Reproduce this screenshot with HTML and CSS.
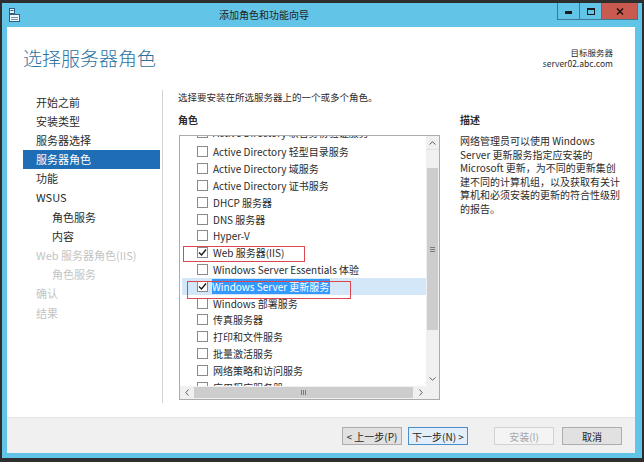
FILE: index.html
```html
<!DOCTYPE html>
<html>
<head>
  <meta charset="utf-8">
  <title>添加角色和功能向导</title>
  <link rel="stylesheet" href="styles.css">
</head>
<body>
  <div class="window">
    <div class="titlebar">
      <svg class="app-icon" width="11" height="14" viewBox="0 0 11 14">
        <rect x="0.5" y="0.5" width="5" height="5" fill="#e8f4fb" stroke="#2d5f86"/>
        <rect x="1.5" y="2" width="3" height="1" fill="#2d5f86"/>
        <rect x="0.5" y="6.5" width="10" height="7" fill="#f4f8fb" stroke="#2d5f86"/>
        <rect x="2" y="9" width="7" height="1" fill="#6a8fb0"/>
        <rect x="2" y="11" width="7" height="1" fill="#6a8fb0"/>
      </svg>
      <div class="title">添加角色和功能向导</div>
      <div class="caption-buttons">
        <div class="cap-btn cap-min"><span></span></div>
        <div class="cap-btn cap-max"><span></span></div>
        <div class="cap-btn cap-close">
          <svg width="8" height="7" viewBox="0 0 8 7"><path d="M1 0.5 L7 6.5 M7 0.5 L1 6.5" stroke="#2a1512" stroke-width="1.6"/></svg>
        </div>
      </div>
    </div>

    <div class="content">
      <div class="page-header">
        <h1>选择服务器角色</h1>
        <div class="target">
          <div>目标服务器</div>
          <div>server02.abc.com</div>
        </div>
      </div>

      <div class="page-body">
        <ul class="nav">
          <li>开始之前</li>
          <li>安装类型</li>
          <li>服务器选择</li>
          <li class="active">服务器角色</li>
          <li>功能</li>
          <li>WSUS</li>
          <li class="sub">角色服务</li>
          <li class="sub">内容</li>
          <li class="disabled">Web 服务器角色(IIS)</li>
          <li class="sub disabled">角色服务</li>
          <li class="disabled">确认</li>
          <li class="disabled">结果</li>
        </ul>

        <div class="main">
          <div class="intro">选择要安装在所选服务器上的一个或多个角色。</div>
          <div class="columns">
            <div class="roles">
              <div class="section-label">角色</div>
              <div class="listbox">
                <div class="list-area">
                  <div class="list-rows">
                    <div class="row row-partial"><span class="check"></span>Active Directory 联合身份验证服务</div>
                    <div class="row"><span class="check"></span>Active Directory 轻型目录服务</div>
                    <div class="row"><span class="check"></span>Active Directory 域服务</div>
                    <div class="row"><span class="check"></span>Active Directory 证书服务</div>
                    <div class="row"><span class="check"></span>DHCP 服务器</div>
                    <div class="row"><span class="check"></span>DNS 服务器</div>
                    <div class="row"><span class="check"></span>Hyper-V</div>
                    <div class="row"><span class="check checked"><svg width="9" height="9" viewBox="0 0 9 9"><path d="M1 4.5 L3.5 7 L8 1.5" fill="none" stroke="#1c1c1c" stroke-width="1.4"/></svg></span>Web 服务器(IIS)</div>
                    <div class="row"><span class="check"></span>Windows Server Essentials 体验</div>
                    <div class="row selected"><span class="check checked"><svg width="9" height="9" viewBox="0 0 9 9"><path d="M1 4.5 L3.5 7 L8 1.5" fill="none" stroke="#1c1c1c" stroke-width="1.4"/></svg></span><span class="sel-text">Windows Server 更新服务</span></div>
                    <div class="row"><span class="check"></span>Windows 部署服务</div>
                    <div class="row"><span class="check"></span>传真服务器</div>
                    <div class="row"><span class="check"></span>打印和文件服务</div>
                    <div class="row"><span class="check"></span>批量激活服务</div>
                    <div class="row"><span class="check"></span>网络策略和访问服务</div>
                    <div class="row"><span class="check"></span>应用程序服务器</div>
                  </div>
                  <div class="vscroll">
                    <div class="arrow arrow-up"><svg width="7" height="4" viewBox="0 0 7 4"><path d="M0.5 3.5 L3.5 0.8 L6.5 3.5" fill="none" stroke="#606060"/></svg></div>
                    <div class="vthumb"><span class="grip-h"></span></div>
                    <div class="arrow arrow-down"><svg width="7" height="4" viewBox="0 0 7 4"><path d="M0.5 0.5 L3.5 3.2 L6.5 0.5" fill="none" stroke="#606060"/></svg></div>
                  </div>
                </div>
                <div class="hscroll">
                  <div class="arrow"><svg width="4" height="7" viewBox="0 0 4 7"><path d="M3.5 0.5 L0.8 3.5 L3.5 6.5" fill="none" stroke="#606060"/></svg></div>
                  <div class="hthumb"><span class="grip-v"></span></div>
                  <div class="arrow"><svg width="4" height="7" viewBox="0 0 4 7"><path d="M0.5 0.5 L3.2 3.5 L0.5 6.5" fill="none" stroke="#606060"/></svg></div>
                  <div class="corner"></div>
                </div>
                <div class="mark mark-web"></div>
                <div class="mark mark-wsus"></div>
              </div>
            </div>

            <div class="desc">
              <div class="section-label">描述</div>
              <div class="desc-text">网络管理员可以使用 Windows<br>Server 更新服务指定应安装的<br>Microsoft 更新，为不同的更新集创<br>建不同的计算机组，以及获取有关计<br>算机和必须安装的更新的符合性级别<br>的报告。</div>
            </div>
          </div>
        </div>
      </div>
    </div>

    <div class="footer">
      <button class="button">&lt; 上一步(P)</button>
      <button class="button button-next">下一步(N) &gt;</button>
      <button class="button button-install" disabled>安装(I)</button>
      <button class="button button-cancel">取消</button>
    </div>
  </div>
</body>
</html>
```

FILE: styles.css
```css
body {
  margin: 0;
  width: 644px;
  height: 462px;
  overflow: hidden;
  background-color: #2e2e2e;
  font-family: "Noto Sans CJK SC", "Noto Sans", sans-serif;
  color: #2b2b2b;
}

.window {
  width: 640px;
  height: 455px;
  margin: 3px 2px 4px 2px;
  padding: 0 7px 5px 5px;
  box-sizing: border-box;
  background-color: #62c5e8;
  display: flex;
  flex-direction: column;
}

/* Title bar */
.titlebar {
  height: 24px;
  margin: 0 -7px 0 -5px;
  padding-right: 4px;
  display: flex;
  align-items: flex-start;
  flex-shrink: 0;
}

.app-icon {
  margin: 5px 0 0 7px;
}

.title {
  flex: 1;
  padding-left: 199px;
  font-size: 10px;
  line-height: 24px;
  color: #1e1e1e;
}

.caption-buttons {
  display: flex;
  height: 17px;
}

.cap-btn {
  height: 17px;
  box-sizing: border-box;
  border: 1px solid #3d7892;
  border-top: none;
  display: flex;
  align-items: center;
  justify-content: center;
}

.cap-min,
.cap-max {
  width: 23px;
  background-color: #62c5e8;
}

.cap-max {
  width: 22px;
  border-left: none;
}

.cap-min span {
  width: 7px;
  height: 3px;
  background-color: #1a1a1a;
  margin-top: 3px;
}

.cap-max span {
  width: 6px;
  height: 4px;
  border: 1px solid #1a1a1a;
  border-top-width: 2px;
}

.cap-close {
  width: 36px;
  border-left: none;
  background-color: #c85a4f;
}

/* Content */
.content {
  flex: 1;
  background-color: #ffffff;
  display: flex;
  flex-direction: column;
  min-height: 0;
}

.page-header {
  height: 63px;
  box-sizing: border-box;
  padding: 20px 22px 0 16px;
  display: flex;
  justify-content: space-between;
  align-items: flex-start;
  flex-shrink: 0;
}

.page-header h1 {
  margin: 0;
  font-size: 19px;
  line-height: 22px;
  font-weight: 300;
  color: #2c72a0;
}

.target {
  text-align: right;
  font-size: 8.5px;
  line-height: 10.5px;
  color: #2b2b2b;
}

.page-body {
  flex: 1;
  display: flex;
  padding-bottom: 14px;
  min-height: 0;
}

.nav {
  width: 156px;
  box-sizing: border-box;
  margin: 0;
  padding: 2.5px 2px 0 16px;
  list-style: none;
  border-right: 1px solid #d4d4d4;
  font-size: 11px;
}

.nav li {
  height: 19.2px;
  line-height: 19.2px;
  padding-left: 13px;
  white-space: nowrap;
}

.nav li.sub {
  padding-left: 29px;
}

.nav li.active {
  background-color: #1f6db5;
  color: #ffffff;
}

.nav li.disabled {
  color: #c4c4c4;
}

.main {
  flex: 1;
  padding: 1px 0 0 15px;
}

.intro {
  font-size: 9.5px;
  line-height: 12px;
}

.columns {
  display: flex;
  margin-top: 11px;
  gap: 20px;
}

.roles {
  width: 262px;
}

.section-label {
  font-size: 10px;
  line-height: 12px;
  font-weight: 700;
  color: #2b2b2b;
}

.listbox {
  position: relative;
  margin: 9px 0 0 1px;
  width: 261px;
  height: 265px;
  box-sizing: border-box;
  border: 1px solid #acacac;
  display: flex;
  flex-direction: column;
  overflow: hidden;
}

.list-area {
  flex: 1;
  display: flex;
  min-height: 0;
}

.list-rows {
  flex: 1;
  overflow: hidden;
}

.row {
  height: 16.8px;
  display: flex;
  align-items: center;
  padding-left: 17px;
  font-size: 10px;
  white-space: nowrap;
  color: #2b2b2b;
}

/* row scrolled almost out of view at the top */
.row-partial {
  height: 22.6px;
  margin-top: -15px;
}

.row.selected {
  margin-left: 2px;
  padding-left: 15px;
  background-color: #d3e7f8;
}

.sel-text {
  background-color: #3399ff;
  color: #ffffff;
  padding-right: 1px;
}

.check {
  width: 11px;
  height: 11px;
  box-sizing: border-box;
  border: 1px solid #8a8a8a;
  background-color: #ffffff;
  margin-right: 5px;
  flex-shrink: 0;
  display: flex;
  align-items: center;
  justify-content: center;
}

.row.selected .check {
  margin-right: 4px;
}

.vscroll {
  width: 13px;
  background-color: #f0f0f0;
  display: flex;
  flex-direction: column;
}

.arrow {
  width: 13px;
  height: 14px;
  display: flex;
  align-items: center;
  justify-content: center;
  flex-shrink: 0;
}

.arrow-up {
  margin-bottom: 18px;
  border-bottom: 1px solid #e2e2e2;
  box-sizing: border-box;
}

.arrow-down {
  margin-top: auto;
}

.vthumb {
  height: 162px;
  margin: 0 1px;
  background-color: #cdcdcd;
  display: flex;
  align-items: center;
  justify-content: center;
}

.grip-h {
  width: 5px;
  height: 5px;
  border-top: 1px solid #7a7a7a;
  border-bottom: 1px solid #7a7a7a;
  box-sizing: border-box;
  background: linear-gradient(#7a7a7a, #7a7a7a) center / 5px 1px no-repeat;
}

.hscroll {
  height: 13px;
  display: flex;
  background-color: #f0f0f0;
  flex-shrink: 0;
}

.hscroll .arrow {
  height: 13px;
}

.hthumb {
  width: 219px;
  margin: 1px 1px;
  background-color: #cdcdcd;
  display: flex;
  align-items: center;
  justify-content: center;
}

.grip-v {
  width: 5px;
  height: 5px;
  border-left: 1px solid #7a7a7a;
  border-right: 1px solid #7a7a7a;
  box-sizing: border-box;
  background: linear-gradient(#7a7a7a, #7a7a7a) center / 1px 5px no-repeat;
}

.corner {
  flex: 1;
  background-color: #f0f0f0;
}

/* Red annotation boxes over the list */
.mark {
  position: absolute;
  box-sizing: border-box;
  border: 1.5px solid #dc4650;
}

.mark-web {
  left: 3px;
  top: 110px;
  width: 122px;
  height: 16px;
}

.mark-wsus {
  left: 7px;
  top: 145px;
  width: 164px;
  height: 18px;
}

.desc {
  width: 162px;
}

.desc-text {
  margin-top: 8px;
  font-size: 10px;
  line-height: 13.5px;
  white-space: nowrap;
  color: #2b2b2b;
}

/* Footer buttons */
.footer {
  height: 36px;
  box-sizing: border-box;
  flex-shrink: 0;
  background-color: #f0f0f0;
  border-top: 1px solid #e4e4e4;
  padding: 9px 13px 0 0;
  display: flex;
  justify-content: flex-end;
  align-items: flex-start;
}

.button {
  width: 60px;
  height: 18px;
  padding: 0;
  box-sizing: border-box;
  border: 1px solid #adadad;
  background-color: #e1e1e1;
  font-family: "Noto Sans CJK SC", "Noto Sans", sans-serif;
  font-size: 10px;
  color: #1e1e1e;
}

.button-next {
  margin-left: 6px;
  background-color: #e2eef9;
  border-color: #4a8fcb;
}

.button-install {
  margin-left: 26px;
  background-color: #f4f4f4;
  border-color: #d2d2d2;
  color: #a6a6a6;
}

.button-cancel {
  margin-left: 8px;
}
```
